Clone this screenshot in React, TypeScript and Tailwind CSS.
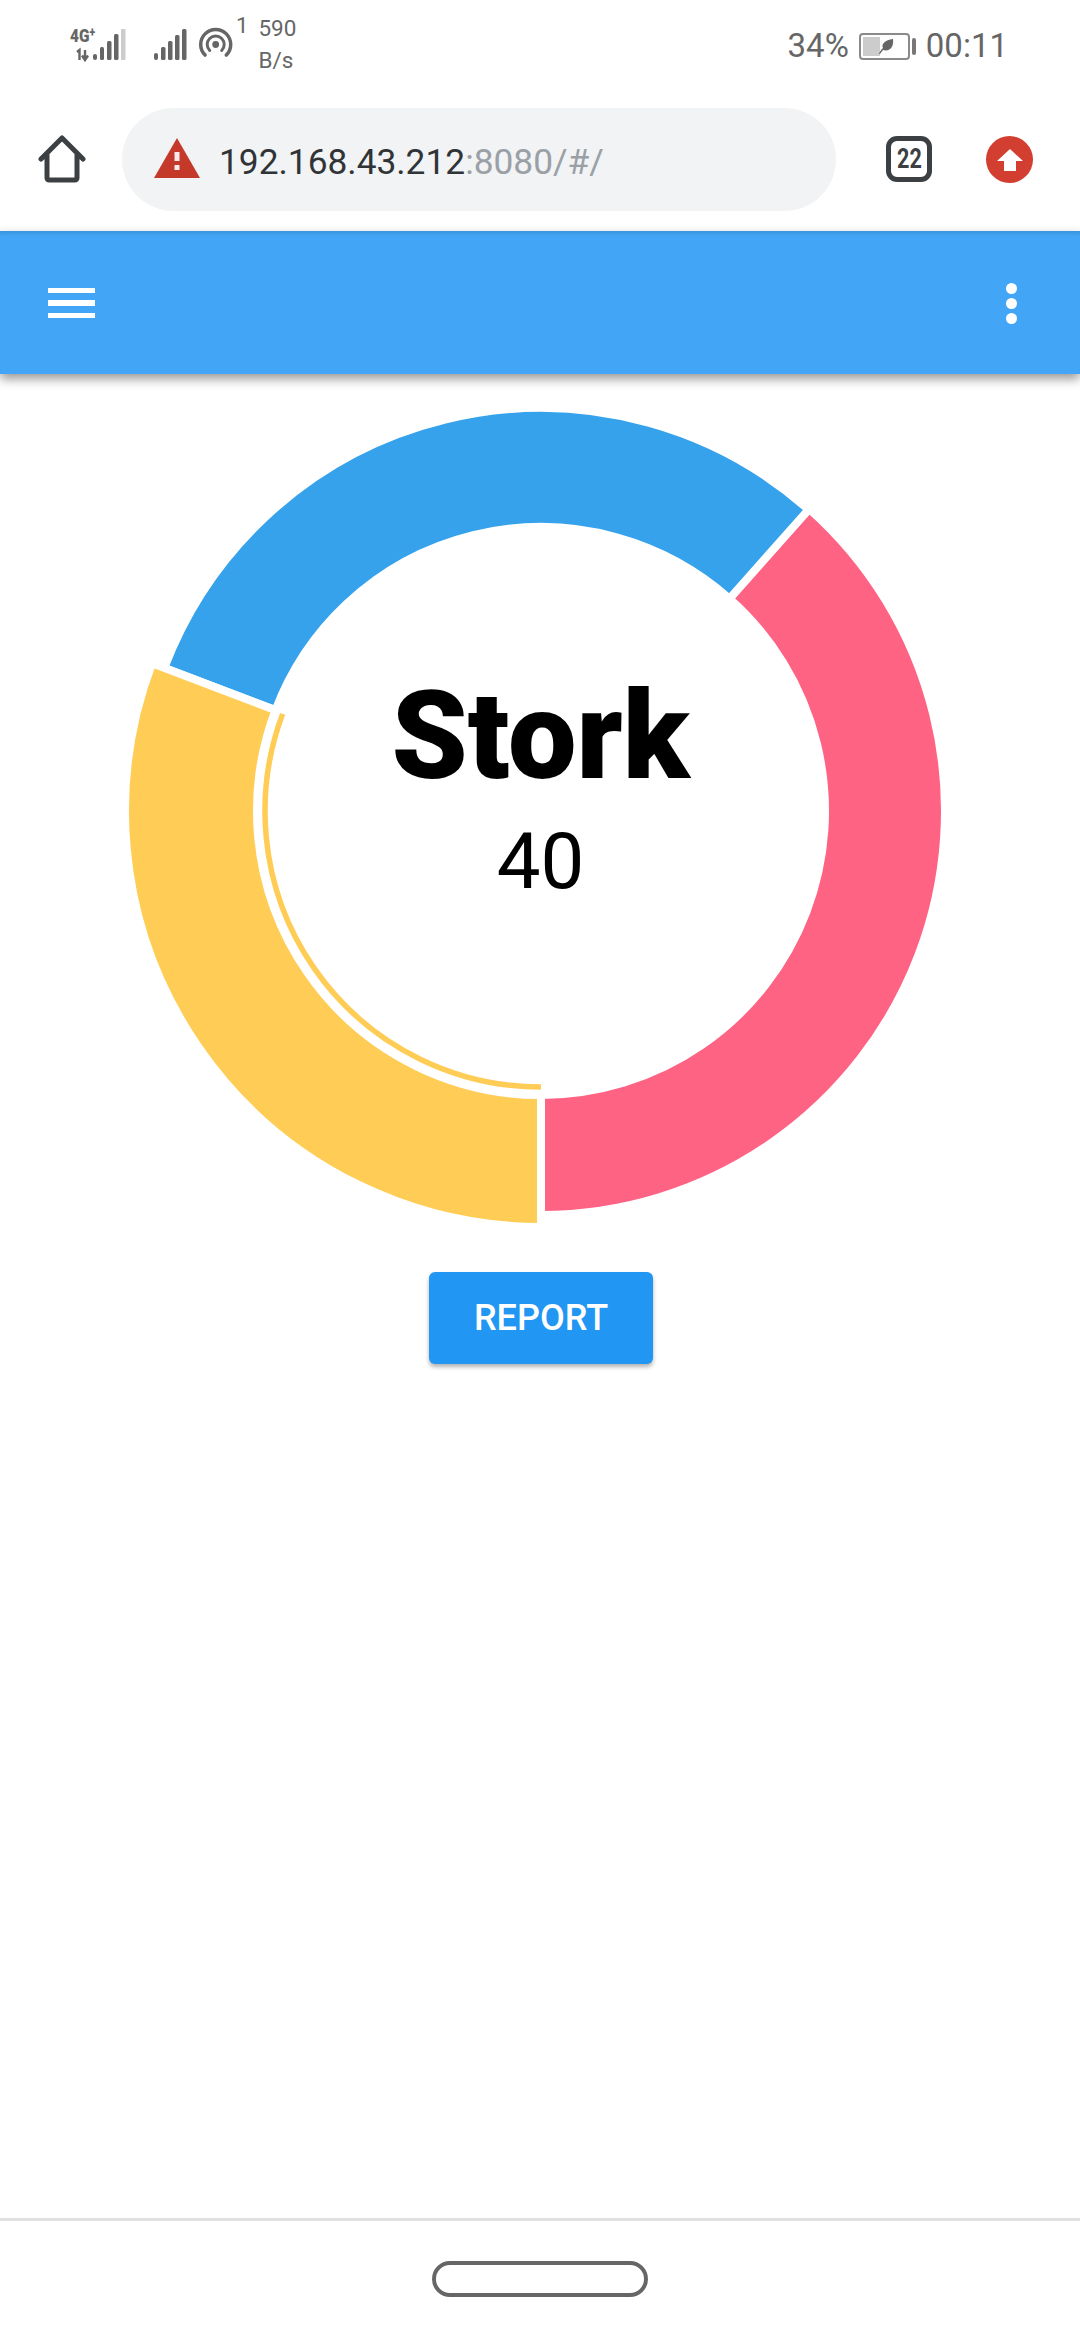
const CX = 541;
const CY = 423;

function pt(r: number, deg: number) {
  const a = ((deg - 90) * Math.PI) / 180;
  return `${(CX + r * Math.cos(a)).toFixed(2)} ${(CY + r * Math.sin(a)).toFixed(2)}`;
}

function wedge(rOut: number, rIn: number, a0: number, a1: number) {
  const large = a1 - a0 > 180 ? 1 : 0;
  return `M${pt(rOut, a0)} A${rOut} ${rOut} 0 ${large} 1 ${pt(rOut, a1)} L${pt(rIn, a1)} A${rIn} ${rIn} 0 ${large} 0 ${pt(rIn, a0)} Z`;
}

function arc(r: number, a0: number, a1: number) {
  return `M${pt(r, a0)} A${r} ${r} 0 0 1 ${pt(r, a1)}`;
}

function Doughnut() {
  return (
    <svg width="1080" height="860" viewBox="0 0 1080 860" className="block">
      <path d={wedge(404, 284, 41.6, 180)} fill="#FF6384" stroke="#fff" strokeWidth="8" />
      <path d={wedge(403, 284, 290.8, 401.6)} fill="#36A2EB" stroke="#fff" strokeWidth="8" />
      <path d={wedge(416, 284, 180, 290.8)} fill="#FFCD56" stroke="#fff" strokeWidth="8" />
      <path d={arc(276, 180, 290.6)} fill="none" stroke="#FFCD56" strokeWidth="5.5" />
    </svg>
  );
}

function StatusLeft() {
  return (
    <div className="flex items-start">
      <svg width="180" height="70" viewBox="0 0 180 70" className="ml-[68px] mt-[18px]">
        <text x="2" y="24" fontFamily="Roboto" fontWeight="900" fontSize="19" fill="#666" textLength="25" lengthAdjust="spacingAndGlyphs">
          4G<tspan dy="-6" fontSize="13">+</tspan>
        </text>
        <path d="M9 34l2.5-2V42M17 32v10M14 37.5l3 4.5 3-4.5" stroke="#666" strokeWidth="2.4" fill="none" />
        <rect x="25" y="36" width="4" height="6" rx="2" fill="#666" />
        <rect x="32" y="29" width="4" height="13" rx="1.5" fill="#666" />
        <rect x="39" y="23" width="4.5" height="19" rx="1.5" fill="#666" />
        <rect x="46" y="16" width="4.5" height="26" rx="1.5" fill="#666" />
        <rect x="53" y="11" width="4.5" height="31" rx="1" fill="#ccc" />
        <rect x="86" y="35" width="4" height="7" rx="2" fill="#666" />
        <rect x="93" y="29" width="4.5" height="13" rx="1.5" fill="#666" />
        <rect x="100" y="23" width="4.5" height="19" rx="1.5" fill="#666" />
        <rect x="107" y="17" width="4.5" height="25" rx="1.5" fill="#666" />
        <rect x="114" y="11" width="4.5" height="31" rx="1.5" fill="#666" />
        <circle cx="147.7" cy="26.5" r="3.4" fill="#666" />
        <path d="M141.7 32.5a8.5 8.5 0 1 1 12 0" fill="none" stroke="#666" strokeWidth="3" strokeLinecap="round" />
        <path d="M137.1 37.1a15 15 0 1 1 21.2 0" fill="none" stroke="#666" strokeWidth="3.5" strokeLinecap="round" />
      </svg>
      <span className="-ml-[12px] mt-[14px] text-[22px] leading-[24px] text-[#666]">1</span>
      <div className="ml-[10px] mt-[12px] flex flex-col text-[22.5px] leading-[32px] text-[#666]">
        <span>590</span>
        <span>B/s</span>
      </div>
    </div>
  );
}

function StatusRight() {
  return (
    <div className="mt-[24px] mr-[72px] flex items-center text-[33px] leading-[44px] text-[#666]">
      <span>34%</span>
      <div className="ml-[10px] relative flex h-[27px] w-[51px] items-stretch rounded-[4px] border-2 border-[#8a8a8a] p-[2px]">
        <div className="w-[17px] bg-[#ccc]" />
        <svg width="16" height="17" viewBox="0 0 16 17" className="absolute left-[17px] top-[3px]">
          <path d="M1 16C2 13 3 12 5 10 3 6 7 2 15 1c1 8-3 13-10 11l-3 4z" fill="#666" />
        </svg>
      </div>
      <div className="ml-[2px] h-[17px] w-[4px] rounded-[2px] bg-[#777]" />
      <span className="ml-[10px]">00:11</span>
    </div>
  );
}

function Toolbar() {
  return (
    <div className="flex h-[131px] items-start">
      <svg width="48" height="48" viewBox="0 0 48 48" className="ml-[38px] mt-[35px]" fill="none">
        <path d="M3 24 24 3l21 21M9 19v24a2 2 0 0 0 2 2h26a2 2 0 0 0 2-2V19" stroke="#3c4043" strokeWidth="5" strokeLinejoin="round" strokeLinecap="round" />
      </svg>
      <div className="ml-[36px] mt-[8px] flex h-[103px] w-[714px] items-center rounded-full bg-[#f1f3f4]">
        <svg width="46" height="40" viewBox="0 0 46 40" className="ml-[32px] mt-[-3px]">
          <path d="M23 0 46 40H0z" fill="#c5392a" />
          <rect x="20.5" y="14" width="5" height="9" fill="#fff" opacity="0.9" />
          <rect x="20.5" y="27" width="5" height="5" fill="#fff" opacity="0.9" />
        </svg>
        <span className="ml-[19px] mt-[4px] text-[35.3px] leading-[44px] text-[#303437]">
          192.168.43.212<span className="text-[#9aa0a6]">:8080/#/</span>
        </span>
      </div>
      <div className="ml-[50px] mt-[36px] flex h-[46px] w-[46px] items-center justify-center rounded-[11px] border-[5px] border-[#3c4043]">
        <span className="scale-x-[0.8] text-[27px] font-bold leading-none text-[#3c4043]">22</span>
      </div>
      <div className="ml-[54px] mt-[36px] flex h-[47px] w-[47px] items-center justify-center rounded-full bg-[#d23f31]">
        <svg width="26" height="24" viewBox="0 0 26 24">
          <path d="M13 1 26 13h-7v10H7V13H0z" fill="#fff" />
        </svg>
      </div>
    </div>
  );
}

function AppBar() {
  return (
    <div className="relative flex h-[143px] items-center justify-between bg-[#42a5f5] pl-[48px] pr-[63px] pt-[1px] shadow-[0_5px_10px_rgba(0,0,0,0.4),inset_0_5px_4px_-3px_rgba(0,0,0,0.12)]">
      <div className="flex w-[47px] flex-col gap-[7px]">
        <div className="h-[5.5px] bg-white" />
        <div className="h-[5.5px] bg-white" />
        <div className="h-[5.5px] bg-white" />
      </div>
      <div className="flex flex-col gap-[4px]">
        <div className="h-[11px] w-[11px] rounded-full bg-white" />
        <div className="h-[11px] w-[11px] rounded-full bg-white" />
        <div className="h-[11px] w-[11px] rounded-full bg-white" />
      </div>
    </div>
  );
}

export default function App() {
  return (
    <div className="flex h-[2340px] w-[1080px] flex-col overflow-hidden bg-white font-['Roboto',sans-serif]">
      <div className="flex h-[100px] items-start justify-between">
        <StatusLeft />
        <StatusRight />
      </div>
      <Toolbar />
      <AppBar />
      <main className="flex flex-1 flex-col items-center">
        <div className="relative mt-[14px] h-[860px] w-[1080px]">
          <Doughnut />
          <div className="absolute left-[1px] right-0 top-[279px] flex flex-col items-center">
            <span className="text-[122px] font-black leading-[140px] text-black">Stork</span>
            <span className="mt-[10px] text-[78px] leading-[90px] text-black">40</span>
          </div>
        </div>
        <button className="ml-[2px] mt-[24px] flex h-[92px] w-[224px] items-center justify-center rounded-[6px] bg-[#2196f3] text-[36px] font-medium text-white shadow-[0_3px_4px_rgba(0,0,0,0.3)]">
          REPORT
        </button>
      </main>
      <nav className="flex h-[122px] items-start justify-center border-t-[3px] border-[#e0e0e0]">
        <div className="mt-[40px] h-[36px] w-[216px] rounded-full border-4 border-[#666]" />
      </nav>
    </div>
  );
}
